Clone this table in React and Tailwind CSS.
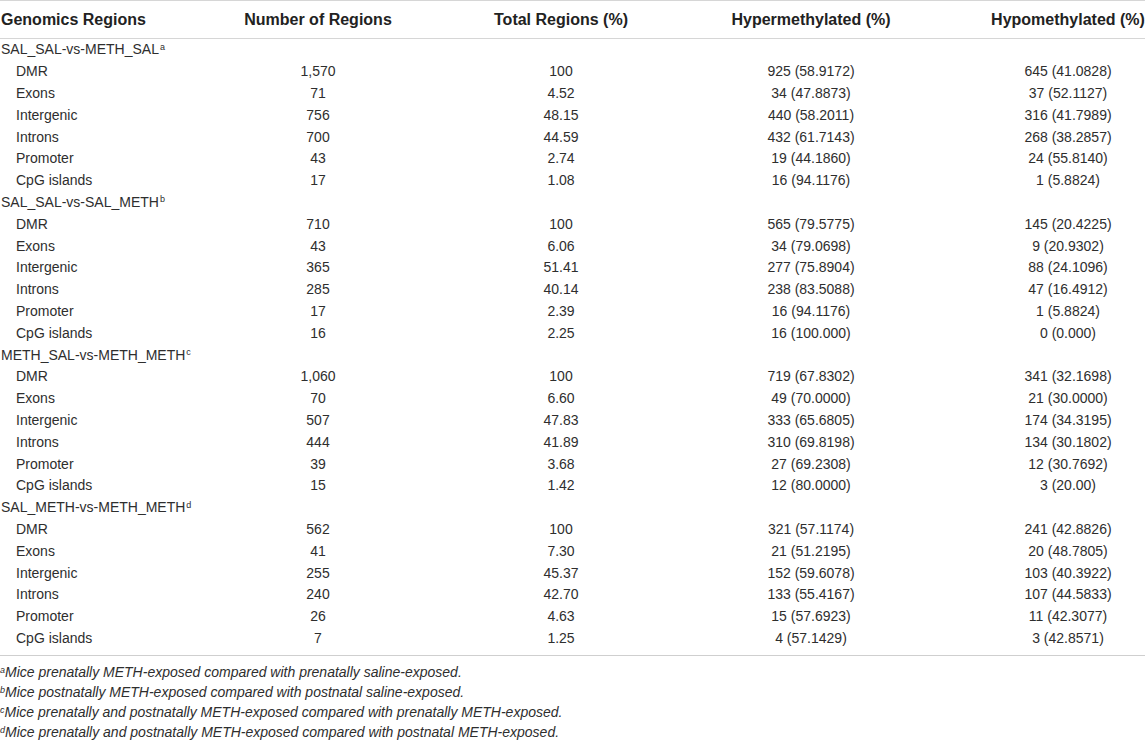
import React from "react";

const groups = [
  {
    name: "SAL_SAL-vs-METH_SAL",
    sup: "a",
    rows: [
      ["DMR", "1,570", "100", "925 (58.9172)", "645 (41.0828)"],
      ["Exons", "71", "4.52", "34 (47.8873)", "37 (52.1127)"],
      ["Intergenic", "756", "48.15", "440 (58.2011)", "316 (41.7989)"],
      ["Introns", "700", "44.59", "432 (61.7143)", "268 (38.2857)"],
      ["Promoter", "43", "2.74", "19 (44.1860)", "24 (55.8140)"],
      ["CpG islands", "17", "1.08", "16 (94.1176)", "1 (5.8824)"],
    ],
  },
  {
    name: "SAL_SAL-vs-SAL_METH",
    sup: "b",
    rows: [
      ["DMR", "710", "100", "565 (79.5775)", "145 (20.4225)"],
      ["Exons", "43", "6.06", "34 (79.0698)", "9 (20.9302)"],
      ["Intergenic", "365", "51.41", "277 (75.8904)", "88 (24.1096)"],
      ["Introns", "285", "40.14", "238 (83.5088)", "47 (16.4912)"],
      ["Promoter", "17", "2.39", "16 (94.1176)", "1 (5.8824)"],
      ["CpG islands", "16", "2.25", "16 (100.000)", "0 (0.000)"],
    ],
  },
  {
    name: "METH_SAL-vs-METH_METH",
    sup: "c",
    rows: [
      ["DMR", "1,060", "100", "719 (67.8302)", "341 (32.1698)"],
      ["Exons", "70", "6.60", "49 (70.0000)", "21 (30.0000)"],
      ["Intergenic", "507", "47.83", "333 (65.6805)", "174 (34.3195)"],
      ["Introns", "444", "41.89", "310 (69.8198)", "134 (30.1802)"],
      ["Promoter", "39", "3.68", "27 (69.2308)", "12 (30.7692)"],
      ["CpG islands", "15", "1.42", "12 (80.0000)", "3 (20.00)"],
    ],
  },
  {
    name: "SAL_METH-vs-METH_METH",
    sup: "d",
    rows: [
      ["DMR", "562", "100", "321 (57.1174)", "241 (42.8826)"],
      ["Exons", "41", "7.30", "21 (51.2195)", "20 (48.7805)"],
      ["Intergenic", "255", "45.37", "152 (59.6078)", "103 (40.3922)"],
      ["Introns", "240", "42.70", "133 (55.4167)", "107 (44.5833)"],
      ["Promoter", "26", "4.63", "15 (57.6923)", "11 (42.3077)"],
      ["CpG islands", "7", "1.25", "4 (57.1429)", "3 (42.8571)"],
    ],
  },
];

const notes = [
  ["a", "Mice prenatally METH-exposed compared with prenatally saline-exposed."],
  ["b", "Mice postnatally METH-exposed compared with postnatal saline-exposed."],
  ["c", "Mice prenatally and postnatally METH-exposed compared with prenatally METH-exposed."],
  ["d", "Mice prenatally and postnatally METH-exposed compared with postnatal METH-exposed."],
];

const grid = "grid grid-cols-[145px_346px_140px_360px_154px] items-center";

export default function App() {
  return (
    <div
      className="w-[1145px] h-[742px] bg-white text-[#2e2e2e] overflow-hidden"
      style={{ fontFamily: '"Liberation Sans", Arial, sans-serif' }}
    >
      <div className={`${grid} h-[39px] border-t border-b border-[#d6d6d6] text-[16px] font-bold text-[#222] whitespace-nowrap`}>
        <div className="pl-px">Genomics Regions</div>
        <div className="text-center">Number of Regions</div>
        <div className="text-center">Total Regions (%)</div>
        <div className="text-center">Hypermethylated (%)</div>
        <div className="text-center">Hypomethylated (%)</div>
      </div>
      <div className="pb-[6px] border-b border-[#cfcfcf] text-[14px] whitespace-nowrap">
        {groups.map((g) => (
          <React.Fragment key={g.name}>
            <div className={`${grid} h-[21.8px]`}>
              <div className="pl-px col-span-5">
                {g.name}
                <sup className="text-[9px] ml-px">{g.sup}</sup>
              </div>
            </div>
            {g.rows.map((r) => (
              <div key={g.name + r[0]} className={`${grid} h-[21.8px]`}>
                <div className="pl-[16px]">{r[0]}</div>
                <div className="text-center">{r[1]}</div>
                <div className="text-center">{r[2]}</div>
                <div className="text-center">{r[3]}</div>
                <div className="text-center">{r[4]}</div>
              </div>
            ))}
          </React.Fragment>
        ))}
      </div>
      <div className="pt-[6px] text-[14px] italic leading-[20px] whitespace-nowrap">
        {notes.map(([s, t]) => (
          <div key={s}>
            <sup className="text-[9px]">{s}</sup>
            {t}
          </div>
        ))}
      </div>
    </div>
  );
}
